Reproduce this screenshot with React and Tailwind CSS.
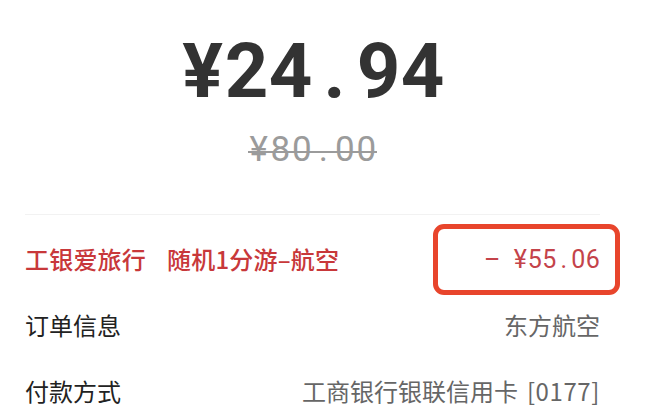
import React from "react";

function Mono({ text, cell }) {
  return (
    <>
      {text.split("").map((c, i) => (
        <span key={i} className={cell}>
          {c === " " ? "\u00a0" : c}
        </span>
      ))}
    </>
  );
}

const cjk = { fontFamily: '"Noto Sans CJK SC", "Noto Sans", sans-serif' };
const num = { fontFamily: 'Roboto, "Noto Sans", sans-serif' };

function Row({ left, right, leftClass, rightClass }) {
  return (
    <div className="flex h-[66px] items-center justify-between">
      <div className={leftClass} style={cjk}>{left}</div>
      <div className={rightClass} style={cjk}>{right}</div>
    </div>
  );
}

export default function App() {
  return (
    <div className="relative h-[418px] w-[650px] overflow-hidden bg-white">
      <div className="ml-[25px] w-[575px]">
        <div className="flex flex-col items-center pt-[33px]">
          <div
            className="h-[76px] whitespace-nowrap text-[76px] font-bold leading-[76px] text-[#333333]"
            style={num}
          >
            <Mono text="¥24.94" cell="inline-block w-[44px] text-center" />
          </div>
          <div
            className="relative mt-[23px] h-[35px] whitespace-nowrap text-[35px] leading-[35px] text-[#9b9b9b]"
            style={num}
          >
            <Mono text="¥80.00" cell="inline-block w-[21.5px] text-center" />
            <div className="absolute left-0 right-0 top-[19px] h-[2px] bg-[#9b9b9b]" />
          </div>
        </div>
        <div className="mt-[47px] h-px bg-[#f2f2f2]" />
        <div className="mt-[11px]">
          <div className="flex h-[66px] items-center justify-between">
            <div
              className="flex items-center whitespace-nowrap text-[24px] font-medium leading-[24px] tracking-[0.2px] text-[#c8383a]"
              style={cjk}
            >
              <span>工银爱旅行</span>
              <span className="ml-[21px]">随机1分游–航空</span>
            </div>
            <div
              className="whitespace-nowrap text-[25px] leading-[25px] text-[#c4434a]"
              style={num}
            >
              <Mono text="– ¥55.06" cell="inline-block w-[14.5px] text-center" />
            </div>
          </div>
          <Row
            left="订单信息"
            right="东方航空"
            leftClass="whitespace-nowrap text-[24px] leading-[24px] text-[#222222]"
            rightClass="whitespace-nowrap text-[24px] leading-[24px] text-[#666666]"
          />
          <Row
            left="付款方式"
            right={
              <>
                <span>工商银行银联信用卡</span>
                <span className="ml-[9px] tracking-[0.6px]">[0177]</span>
              </>
            }
            leftClass="whitespace-nowrap text-[24px] leading-[24px] text-[#222222]"
            rightClass="whitespace-nowrap text-[24px] leading-[24px] text-[#666666]"
          />
        </div>
      </div>
      <div className="absolute left-[433px] top-[224px] h-[71px] w-[187px] rounded-[11px] border-[5px] border-[#e8452c]" />
    </div>
  );
}
